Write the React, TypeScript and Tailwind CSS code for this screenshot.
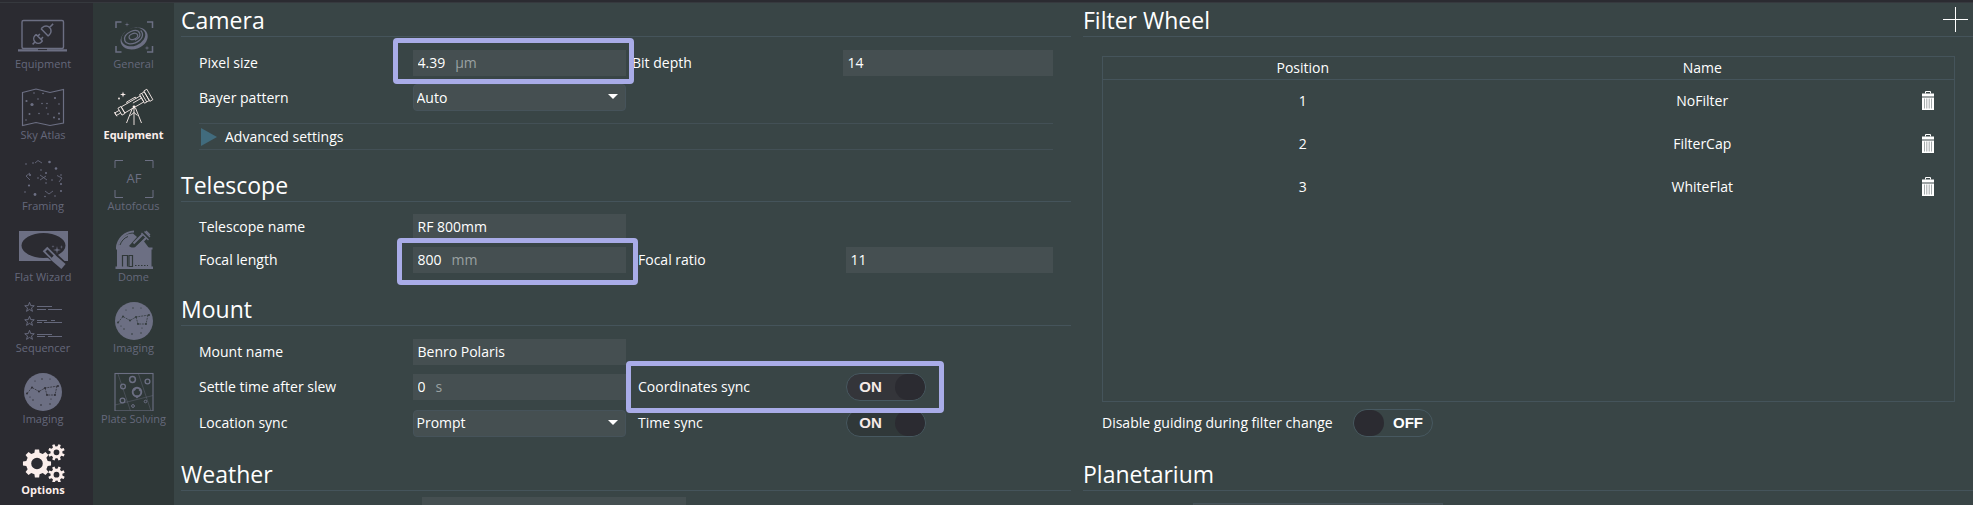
import React, { useState } from "react";

type IconProps = { children: React.ReactNode };

function Icon({ children }: IconProps) {
  return (
    <svg viewBox="0 0 52 40" className="h-10 w-[52px]" fill="none" stroke="currentColor" strokeWidth="1" aria-hidden="true">
      {children}
    </svg>
  );
}

function Dots({ points }: { points: number[][] }) {
  return (
    <g fill="currentColor" stroke="none">
      {points.map(([x, y, r], i) => (
        <circle key={i} cx={x} cy={y} r={r ?? 0.8} />
      ))}
    </g>
  );
}

function starPath(cx: number, cy: number, outer: number, inner: number, tips = 5) {
  const pts: string[] = [];
  for (let i = 0; i < tips * 2; i++) {
    const r = i % 2 === 0 ? outer : inner;
    const a = (Math.PI * i) / tips - Math.PI / 2;
    pts.push(`${(cx + r * Math.cos(a)).toFixed(2)} ${(cy + r * Math.sin(a)).toFixed(2)}`);
  }
  return `M${pts.join("L")}Z`;
}

function gearPath(cx: number, cy: number, outer: number, root: number, hole: number, teeth: number, turn = 0) {
  const pts: string[] = [];
  const step = (Math.PI * 2) / teeth;
  for (let i = 0; i < teeth; i++) {
    const a = i * step + turn;
    [
      [root, -0.3],
      [outer, -0.19],
      [outer, 0.19],
      [root, 0.3],
    ].forEach(([r, k]) => {
      pts.push(`${(cx + r * Math.cos(a + k * step)).toFixed(2)} ${(cy + r * Math.sin(a + k * step)).toFixed(2)}`);
    });
  }
  return `M${pts.join("L")}Z M${cx - hole} ${cy}a${hole} ${hole} 0 1 0 ${hole * 2} 0a${hole} ${hole} 0 1 0 ${-hole * 2} 0Z`;
}

const LaptopIcon = () => (
  <Icon>
    <rect x="5" y="4.5" width="41.5" height="28" rx="1.5" strokeWidth="1.4" />
    <path d="M1 34.3h49" strokeWidth="2.2" />
    <path d="M21 33.6h9" strokeWidth="1" className="stroke-[#2b2b31]" />
    <g strokeWidth="1.5" transform="rotate(-45 25.5 18.5)">
      <path d="M11.5 18.5h4M21 14v9M21 14h-1.5a4.5 4.5 0 0 0 0 9H21M21 16.3h3M21 20.7h3" />
      <path d="M28.5 13.5v10M28.5 13.5h2a5 5 0 0 1 0 10h-2M35.5 18.5h5" />
    </g>
  </Icon>
);

const MapIcon = () => (
  <Icon>
    <path d="M5.5 5.5L19 2l14 3.5L46.500 2.500V36L33 38.500 19 35.500 5.500 38.500Z" strokeWidth="1.2" />
    <Dots
      points={[
        [9.5, 14, 1.1], [15, 17.500, 1.6], [17, 6], [26, 6.500], [38, 11, 1.1], [42, 17], [25, 16.500], [30, 16.500],
        [12.500, 27, 1], [22, 26.500], [31, 27], [37, 30.500, 1], [42, 26.500, 1], [42, 32, 1], [9, 33], [29.500, 21], [21, 12],
      ]}
    />
  </Icon>
);

const FramingIcon = () => (
  <Icon>
    <path d="M18 5l3-2.500 4 2.500M13 15l-4 3 4 4M23 17l7 5M23 22l6-4M40 17.500l5 2.500-3 4M28 33l4 3 4-3" strokeWidth="0.8" />
    <Dots
      points={[
        [9, 6], [16, 5], [32.500, 4, 1.3], [39, 10.500, 1.3], [24, 12], [29, 15, 1], [13, 17, 1], [21, 20], [35, 22],
        [44, 26, 1], [12, 27.500, 1.1], [29, 25], [44, 33, 1], [18, 36.500, 1.4], [8, 34], [38, 38], [28, 38.500], [44, 17],
      ]}
    />
  </Icon>
);

const FlatWizardIcon = () => (
  <Icon>
    <path
      fill="currentColor"
      stroke="none"
      fillRule="evenodd"
      d="M2 2h49v30H2ZM4.500 16.500a22 12.500 0 1 0 44 0a22 12.500 0 1 0 -44 0Z"
    />
    <path d="M28 20l19.500 18" strokeWidth="9" className="stroke-[#2b2b31]" />
    <path d="M28 20l8.500 8.500" strokeWidth="6.500" />
    <path d="M29.500 21.500l6.500 6.500" strokeWidth="3" className="stroke-[#2b2b31]" />
    <path d="M35.500 28l11 9.500" strokeWidth="6.500" />
    <g fill="currentColor" stroke="none">
      <path d={starPath(40, 21, 4, 0.9, 4)} />
      <path d={starPath(44.500, 18, 2, 0.5, 4)} />
      <path d={starPath(36, 17.500, 1.600, 0.5, 4)} />
    </g>
  </Icon>
);

const SequencerIcon = () => (
  <Icon>
    <path d={[7.5, 21.5, 35.5].map((y) => starPath(12.5, y - 0.2, 5, 2.1)).join("")} strokeWidth="0.9" />
    <path
      d="M20 6.500h15M20 9.500h9M31 9.500h14M20 20.500h10M34 20.500h4M20 22.500h5M27 22.500h18M20 34.500h15M20 36.500h8M31 36.500h14"
      strokeWidth="0.9"
    />
  </Icon>
);

const SkyIcon = ({ ink }: { ink: string }) => (
  <Icon>
    <circle cx="26" cy="21" r="19" fill="currentColor" stroke="none" />
    <g className={ink}>
      <path d="M10 22.500l5-6 7 4 6-3.500 13-2M28 17l2 7h8l2-9" strokeWidth="0.7" strokeDasharray="2 0.8" />
      <Dots
        points={[
          [10, 22.500, 0.9], [15, 16.500, 0.9], [22, 20.500, 0.9], [28, 17, 0.9], [41, 15, 0.9], [30, 24, 0.9], [38, 24, 0.9],
          [25, 8, 0.7], [18, 10, 0.6], [33, 8, 0.6], [16, 29, 0.7], [24, 34, 0.8], [33, 33, 0.7], [34, 28, 0.6], [13, 26, 0.6],
        ]}
      />
    </g>
  </Icon>
);

const GearsIcon = () => (
  <Icon>
    <path
      fill="currentColor"
      stroke="none"
      fillRule="evenodd"
      d={gearPath(20, 21.5, 14.2, 11, 5.8, 8) + gearPath(39.5, 10.3, 8.4, 6, 2.9, 8, 0.39) + gearPath(39.5, 32.7, 8.4, 6, 2.9, 8, 0.39)}
    />
  </Icon>
);

const GalaxyIcon = () => (
  <Icon>
    <path d="M8 12V6h5.500M39 6h5.500v6M44.500 30v6H39M13.500 36H8v-6" strokeWidth="1.5" />
    <g transform="rotate(-22 26 22)">
      <path
        d="M12 22.500a14 10.500 0 1 0 28 0a14 10.500 0 1 0 -28 0ZM13.500 20.800a12.300 8.800 0 1 0 24.600 0a12.300 8.800 0 1 0 -24.600 0Z"
        fill="currentColor"
        stroke="none"
        fillRule="evenodd"
      />
      <path d="M35 17.500c2 5-2 9.500-9.500 9.500-5.500 0-9-2.500-9-6s3.500-6.200 9-6.200c4.500 0 7.500 2 7.500 5s-3 4.500-7 4.500" strokeWidth="1.300" />
      <ellipse cx="26" cy="20.300" rx="4.500" ry="2.900" strokeWidth="1.300" />
    </g>
    <path fill="currentColor" stroke="none" d={starPath(19, 8.5, 2.5, 0.6, 4) + starPath(39, 32, 2.5, 0.6, 4)} />
  </Icon>
);

const TelescopeIcon = () => (
  <Icon>
    <g transform="rotate(-30 26 16)" strokeWidth="0.8">
      <path d="M13 13h22v7H13ZM9.500 12.500H13v8H9.500ZM9.500 15H4.500v3h5M4.500 14v5M35 11.500h5.500v10H35ZM40.500 10.500h3.500v12h-3.500ZM37.500 11.500v10M25 15.500h10M20 13v-1.500h10V13" />
    </g>
    <path d="M26 20V38M24.500 21L18.500 36M27.500 21l6 15M22.500 28.500l3.500-3 3.500 3" strokeWidth="0.9" />
    <circle cx="26" cy="20" r="1.400" fill="currentColor" stroke="none" />
    <path fill="currentColor" stroke="none" d={starPath(15, 7.5, 3, 0.9, 4)} />
    <Dots points={[[11, 11.500, 0.9]]} />
  </Icon>
);

const AutofocusIcon = () => (
  <Icon>
    <path d="M7 10V2.500h8M37 2.500h8V10M45 32v7.500h-8M15 39.500H7V32" strokeWidth="1" />
    <text x="26" y="25" textAnchor="middle" className="text-[13px]" fill="currentColor" stroke="none">
      AF
    </text>
  </Icon>
);

const DomeIcon = () => (
  <Icon>
    <path d="M9 19a17.500 17.500 0 0 1 17-16.500" strokeWidth="2.200" />
    <path d="M10 19V17C11.500 9 18 4.500 25 4.500L29 8l-8 9 4 3 10-9 6 8H43.500V37.500H45v2.500H7.500v-2.500H9V19Z" fill="currentColor" stroke="none" />
    <path d="M25.500 14.500l9-9M29 18l9-9" strokeWidth="2" />
    <path d="M33.500 4l7 7M36.500 2.500l5.500 5.500M38 2l4 4" strokeWidth="1.300" />
    <path d="M8 19.500h36.500" strokeWidth="2" />
    <g className="stroke-[#2f3838]">
      <path d="M14.500 37.500V26.500h5v11M21 26.500h3.500v11H21Z" strokeWidth="1.200" />
      <path d="M12 16c1.500-4 4-7 8-8.500" strokeWidth="1" />
      <path d="M27 36.500h13" strokeWidth="1" strokeDasharray="1.500 1.500" />
    </g>
  </Icon>
);

const PlateSolvingIcon = () => (
  <Icon>
    <rect x="7" y="2.500" width="38" height="37.500" strokeWidth="1.100" />
    <path d="M10 3l12.500 37M30.500 3L43 40M7 34l38-9.500" strokeWidth="0.700" className="opacity-60" />
    <circle cx="29" cy="21" r="4.300" strokeWidth="1.900" />
    <circle cx="24.500" cy="8.500" r="2.900" strokeWidth="1.500" />
    <circle cx="39.500" cy="10.500" r="2.400" strokeWidth="1.300" />
    <circle cx="15" cy="15.500" r="2.400" strokeWidth="1.300" />
    <circle cx="14.500" cy="29.500" r="2.400" strokeWidth="1.300" />
    <circle cx="37.500" cy="30.500" r="1.300" />
    <circle cx="25" cy="35" r="1.400" />
    <path
      fill="currentColor"
      stroke="none"
      d={starPath(29, 26, 1.5, 1, 4) + starPath(26.5, 18.500, 1.5, 1, 4) + starPath(32, 19, 1.5, 1, 4)}
    />
  </Icon>
);

const mainNav = [
  { label: "Equipment", icon: <LaptopIcon /> },
  { label: "Sky Atlas", icon: <MapIcon /> },
  { label: "Framing", icon: <FramingIcon /> },
  { label: "Flat Wizard", icon: <FlatWizardIcon /> },
  { label: "Sequencer", icon: <SequencerIcon /> },
  { label: "Imaging", icon: <SkyIcon ink="text-[#2b2b31]" /> },
  { label: "Options", icon: <GearsIcon />, active: true },
];

const optionsNav = [
  { label: "General", icon: <GalaxyIcon /> },
  { label: "Equipment", icon: <TelescopeIcon />, active: true },
  { label: "Autofocus", icon: <AutofocusIcon /> },
  { label: "Dome", icon: <DomeIcon /> },
  { label: "Imaging", icon: <SkyIcon ink="text-[#2f3838]" /> },
  { label: "Plate Solving", icon: <PlateSolvingIcon /> },
];

function NavItem({ label, icon, active }: { label: string; icon: React.ReactNode; active?: boolean }) {
  return (
    <li>
      <button
        type="button"
        className={
          active
            ? "flex h-[71px] w-full flex-col items-center pt-3 text-[11px] leading-4 font-bold text-[#fbeeeb]"
            : "flex h-[71px] w-full flex-col items-center pt-3 text-[11px] leading-4 text-[#6c6f83]"
        }
      >
        {icon}
        <span className={active ? "whitespace-nowrap" : "whitespace-nowrap opacity-90"}>{label}</span>
      </button>
    </li>
  );
}

function Heading({ title, children }: { title: string; children?: React.ReactNode }) {
  return (
    <div className="flex h-[34px] items-center justify-between border-b border-[#45545b] pr-[5px]">
      <h2 className="text-[23px] leading-8">{title}</h2>
      {children}
    </div>
  );
}

function Highlight({ className }: { className: string }) {
  return <span className={`pointer-events-none absolute z-10 rounded-sm border-5 border-[#a9ace8] ${className}`} />;
}

function TextField({ id, value, unit }: { id: string; value: string; unit?: string }) {
  return (
    <div className="flex h-[26px] items-center gap-2.5 bg-[#454f51] px-[5px]">
      <input
        id={id}
        defaultValue={value}
        className={unit ? "[field-sizing:content] min-w-0 bg-transparent outline-none" : "w-full min-w-0 bg-transparent outline-none"}
      />
      {unit && <span className="text-[#9aa1a2]">{unit}</span>}
    </div>
  );
}

function SelectField({ id, options }: { id: string; options: string[] }) {
  return (
    <div className="relative">
      <select id={id} className="block h-[27px] w-full appearance-none rounded-sm border border-[#46535a] bg-[#454f51] px-[3px] outline-none">
        {options.map((o) => (
          <option key={o}>{o}</option>
        ))}
      </select>
      <svg viewBox="0 0 10 5" className="pointer-events-none absolute top-[10px] right-2 h-[5px] w-2.5 fill-white" aria-hidden="true">
        <path d="M0 0h10L5 5Z" />
      </svg>
    </div>
  );
}

function Toggle({ id, initial, dark }: { id: string; initial: boolean; dark?: boolean }) {
  const [on, setOn] = useState(initial);
  const tone = on ? (dark ? "bg-[#34353a]" : "bg-[#303839]") : "bg-transparent";
  return (
    <button
      id={id}
      type="button"
      role="switch"
      aria-checked={on}
      onClick={() => setOn(!on)}
      className={`flex h-7 w-20 items-center overflow-hidden rounded-full border border-[#475860] font-['Liberation_Sans'] text-[15px] font-bold ${tone} ${
        on ? "flex-row-reverse text-[#f6eae8]" : "text-white"
      }`}
    >
      <span className="h-full w-[30px] rounded-full bg-[#2b2b31]" />
      <span className="flex-1 text-center">{on ? "ON" : "OFF"}</span>
    </button>
  );
}

function TrashIcon() {
  return (
    <svg viewBox="0 0 12 19" className="h-[19px] w-3" aria-hidden="true">
      <path d="M3.500 2.500V.5h5v2" fill="none" stroke="white" />
      <path d="M0 2.500h12v3H0ZM0 6.500h12V19H0Z" fill="white" />
      <path d="M2.500 7.500v10M4.800 7.500v10M7.200 7.500v10M9.500 7.500v10" stroke="#a3a9aa" strokeWidth="1" />
    </svg>
  );
}

const filters = ["NoFilter", "FilterCap", "WhiteFlat"];

export default function App() {
  return (
    <div className="flex h-screen flex-col overflow-hidden bg-[#394546] font-['Open_Sans','Noto_Sans',sans-serif] text-sm text-white">
      <div className="h-[3px] shrink-0 border-b border-[#36393e] bg-[#2b2b31]" />
      <div className="flex min-h-0 flex-1">
        <nav aria-label="Main" className="w-[93px] shrink-0 bg-[#2b2b31] pt-px pr-[7px]">
          <ul>
            {mainNav.map((item) => (
              <NavItem key={item.label} {...item} />
            ))}
          </ul>
        </nav>
        <nav aria-label="Options" className="w-[81px] shrink-0 bg-[#2f3838] pt-px">
          <ul>
            {optionsNav.map((item) => (
              <NavItem key={item.label} {...item} />
            ))}
          </ul>
        </nav>

        <main className="grid min-w-0 flex-1 grid-cols-2 gap-3 pl-[7px]">
          <div>
            <section>
              <Heading title="Camera" />
              <div className="px-[18px] pt-[13px]">
                <div className="grid grid-cols-4 items-center gap-y-2">
                  <label htmlFor="pixel-size">Pixel size</label>
                  <div className="relative">
                    <TextField id="pixel-size" value="4.39" unit="μm" />
                    <Highlight className="-top-3 -right-2 -bottom-2 -left-5" />
                  </div>
                  <label htmlFor="bit-depth" className="pl-[6px]">Bit depth</label>
                  <div className="pl-[3px]">
                    <TextField id="bit-depth" value="14" />
                  </div>
                  <label htmlFor="bayer">Bayer pattern</label>
                  <SelectField id="bayer" options={["Auto", "None", "RGGB", "BGGR"]} />
                </div>
                <button type="button" className="mt-3 flex h-[27px] w-full items-center gap-2 border-y border-[#435056] pl-0.5">
                  <svg viewBox="0 0 16 20" className="h-5 w-4 fill-[#416b7d]" aria-hidden="true">
                    <path d="M0 1l16 9-16 9Z" />
                  </svg>
                  Advanced settings
                </button>
              </div>
            </section>

            <section className="mt-[18px]">
              <Heading title="Telescope" />
              <div className="grid grid-cols-4 items-center gap-y-[7px] px-[18px] pt-3">
                <label htmlFor="telescope-name">Telescope name</label>
                <TextField id="telescope-name" value="RF 800mm" />
                <label htmlFor="focal-length" className="col-start-1">Focal length</label>
                <div className="relative">
                  <TextField id="focal-length" value="800" unit="mm" />
                  <Highlight className="-top-[9px] -right-3 -bottom-3 -left-4" />
                </div>
                <label htmlFor="focal-ratio" className="pl-3">Focal ratio</label>
                <div className="pl-[6px]">
                  <TextField id="focal-ratio" value="11" />
                </div>
              </div>
            </section>

            <section className="mt-[19px]">
              <Heading title="Mount" />
              <div className="grid grid-cols-4 items-center gap-y-2 px-[18px] pt-[13px]">
                <label htmlFor="mount-name">Mount name</label>
                <TextField id="mount-name" value="Benro Polaris" />
                <label htmlFor="settle" className="col-start-1">Settle time after slew</label>
                <TextField id="settle" value="0" unit="s" />
                <div className="relative col-span-2 grid grid-cols-2 items-center">
                  <label htmlFor="coord-sync" className="pl-3">Coordinates sync</label>
                  <div className="pl-[6px]">
                    <Toggle id="coord-sync" initial={true} dark />
                  </div>
                  <Highlight className="-top-3 right-[109px] -bottom-3 left-0" />
                </div>
                <label htmlFor="location-sync">Location sync</label>
                <SelectField id="location-sync" options={["Prompt", "To telescope", "From telescope"]} />
                <label htmlFor="time-sync" className="pl-3">Time sync</label>
                <div className="pl-[6px]">
                  <Toggle id="time-sync" initial={true} />
                </div>
              </div>
            </section>

            <section className="mt-5">
              <Heading title="Weather" />
              <div className="px-[18px] pt-1.5">
                <input aria-label="Weather source" className="ml-[223px] block h-[26px] w-[264px] bg-[#454f51]" />
              </div>
            </section>
          </div>

          <div>
            <section>
              <Heading title="Filter Wheel">
                <button type="button" aria-label="Add filter">
                  <svg viewBox="0 0 25 25" className="h-[25px] w-[25px]" stroke="white" strokeWidth="1" aria-hidden="true">
                    <path d="M0 12.500h25M12.500 0v25" />
                  </svg>
                </button>
              </Heading>
              <div className="pr-[18px] pl-[19px] pt-[19px]">
                <div className="h-[346px] border border-[#45545b]">
                  <table className="w-full table-fixed text-center">
                    <thead>
                      <tr className="h-[22px] border-b border-[#45545b]">
                        <th scope="col" className="leading-5 font-normal">Position</th>
                        <th scope="col" className="leading-5 font-normal">Name</th>
                        <td className="w-[52px]" />
                      </tr>
                    </thead>
                    <tbody>
                      {filters.map((name, i) => (
                        <tr key={name} className="h-[43px]">
                          <td>{i + 1}</td>
                          <td>{name}</td>
                          <td>
                            <button type="button" aria-label={`Delete ${name}`} className="flex w-full justify-center">
                              <TrashIcon />
                            </button>
                          </td>
                        </tr>
                      ))}
                    </tbody>
                  </table>
                </div>
                <div className="mt-[7px] flex items-center gap-3">
                  <label htmlFor="disable-guiding" className="w-[239px]">Disable guiding during filter change</label>
                  <Toggle id="disable-guiding" initial={false} />
                </div>
              </div>
            </section>
            <section className="mt-5">
              <Heading title="Planetarium" />
              <div className="px-[18px] pt-3">
                <input aria-label="Planetarium software" className="ml-[92px] block h-[26px] w-[250px] border border-[#46535a] bg-[#454f51]" />
              </div>
            </section>
          </div>
        </main>
      </div>
    </div>
  );
}
